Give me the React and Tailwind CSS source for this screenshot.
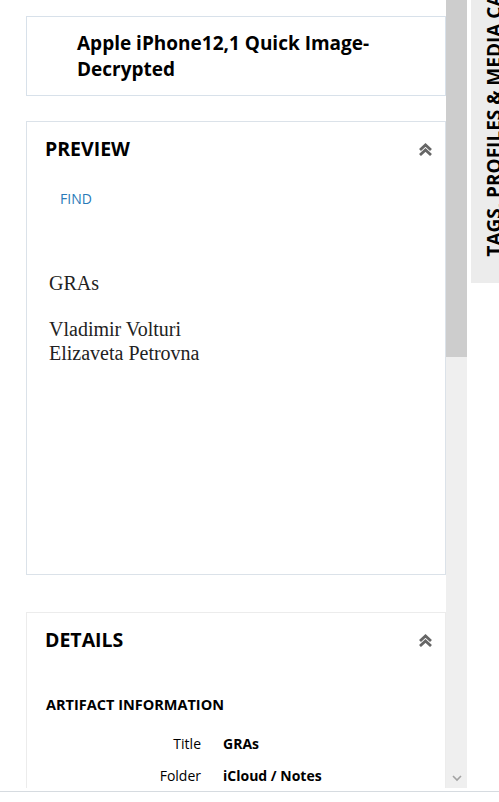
import React from "react";

function DoubleUp() {
  return (
    <svg width="15" height="13" viewBox="0 0 15 13" className="block">
      <path d="M2 7 L7.5 2 L13 7" fill="none" stroke="#666" strokeWidth="2.8" strokeLinecap="butt" strokeLinejoin="miter" />
      <path d="M2 12 L7.5 7 L13 12" fill="none" stroke="#666" strokeWidth="2.8" strokeLinecap="butt" strokeLinejoin="miter" />
    </svg>
  );
}

export default function App() {
  const sans = "font-['Open_Sans',sans-serif]";
  return (
    <div className={`flex h-[802px] w-[499px] flex-col overflow-hidden bg-white ${sans}`}>
      <div className="flex h-[788px]">
        <div className="w-[446px] overflow-hidden pl-[26px] pt-[16px]">
          {/* Card 1 */}
          <div className="flex h-[80px] items-center border border-[#d8e1ea] pl-[50px]">
            <h1 className="text-[19px] font-bold leading-[26px] text-black">
              Apple iPhone12,1 Quick Image-
              <br />
              Decrypted
            </h1>
          </div>

          {/* Card 2 */}
          <div className="mt-[25px] h-[454px] border border-[#dbe2e9]">
            <div className="flex items-center justify-between pl-[18px] pr-[12px] pt-[13px]">
              <h2 className="text-[19.5px] font-bold leading-[28px] text-black">PREVIEW</h2>
              <DoubleUp />
            </div>
            <div className="pl-[33px] pt-[26px] text-[14px] leading-[20px] text-[#2a7ab8]">FIND</div>
            <div className="pl-[22px] pt-[62px] font-['Liberation_Serif',serif] text-[20px] leading-[24px] text-[#222]">
              <p>GRAs</p>
              <p className="mt-[22px]">Vladimir Volturi</p>
              <p>Elizaveta Petrovna</p>
            </div>
          </div>

          {/* Card 3 */}
          <div className="mt-[37px] h-[300px] border border-[#ececec]">
            <div className="flex items-center justify-between pl-[18px] pr-[12px] pt-[13px]">
              <h2 className="text-[19.5px] font-bold leading-[28px] text-black">DETAILS</h2>
              <DoubleUp />
            </div>
            <h3 className="pl-[19px] pt-[41px] text-[14.5px] font-bold leading-[20px] text-black">ARTIFACT INFORMATION</h3>
            <div className="mt-[19px] grid grid-cols-[155px_1fr] gap-x-[22px] gap-y-[12px] pl-[19px] text-[14px] leading-[20px] text-black">
              <div className="text-right">Title</div>
              <div className="font-bold">GRAs</div>
              <div className="text-right">Folder</div>
              <div className="font-bold">iCloud / Notes</div>
            </div>
          </div>
        </div>

        {/* fake scrollbar */}
        <div className="relative w-[21px] bg-[#efefef]">
          <div className="h-[357px] bg-[#cdcdcd]" />
          <svg width="10" height="8" viewBox="0 0 10 8" className="absolute bottom-[6px] left-[6px]">
            <path d="M1 2 L5 6 L9 2" fill="none" stroke="#a3a3a3" strokeWidth="1.6" />
          </svg>
        </div>

        <div className="w-[4px]" />

        {/* side tab */}
        <div className="relative h-[283px] w-[28px] overflow-hidden bg-[#ececec]">
          <div className="absolute bottom-[26px] left-[10px] rotate-180 whitespace-nowrap text-[19px] font-bold leading-[26px] text-black [writing-mode:vertical-rl]">
            TAGS, PROFILES &amp; MEDIA CATEGORIES
          </div>
        </div>
      </div>
      <div className="mt-[3px] h-px bg-[#d6dbe0]" />
    </div>
  );
}
